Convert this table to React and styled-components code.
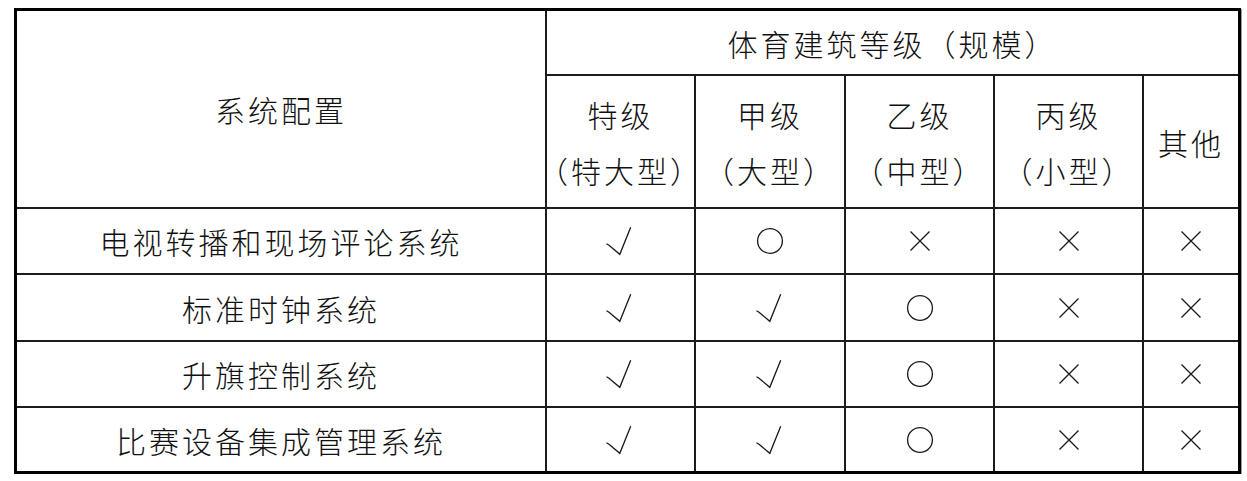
import React from "react";
import styled, { createGlobalStyle } from "styled-components";

const Global = createGlobalStyle`
  html, body { margin: 0; padding: 0; background: #fff; }
  body { font-family: "Noto Sans CJK SC", "Noto Sans", sans-serif; color: #111; }
`;

const Page = styled.div`
  padding: 8px 0 0 14px;
`;

const Table = styled.div`
  display: grid;
  width: max-content;
  grid-template-columns: 528px 147px 148px 147px 147px 94px;
  grid-template-rows: 63px 131px 64px 65px 64px 63px;
  gap: 2px;
  background: #1c1c1c;
  border: 3px solid #000;
  box-shadow: 1px 1px 0 #9a9a9a;
`;

const Cell = styled.div`
  background: #fff;
  display: flex;
  flex-direction: column;
  align-items: center;
  justify-content: center;
  font-size: 30px;
  font-weight: 300;
  line-height: ${(p) => (p.$stack ? "56px" : "1")};
  letter-spacing: 3px;
  white-space: nowrap;
  grid-column: ${(p) => p.$col || "auto"};
  grid-row: ${(p) => p.$row || "auto"};
`;

const Line = styled.span`
  display: block;
  white-space: nowrap;
`;

const Mark = styled.svg`
  display: block;
  overflow: visible;
  fill: none;
  stroke: #1a1a1a;
  stroke-width: 1.3;
  margin-right: ${(p) => p.$shift || 0}px;
`;

const Check = () => (
  <Mark $shift={4} width="25" height="28" viewBox="0 0 25 28">
    <path d="M0.5 16.8 L3 18.2 L13.8 27.3 L24.7 0.2" strokeLinejoin="miter" />
  </Mark>
);

const Circle = () => (
  <Mark width="26" height="26" viewBox="0 0 26 26">
    <circle cx="13" cy="13" r="12.4" />
  </Mark>
);

const Cross = () => (
  <Mark width="20" height="20" viewBox="0 0 20 20">
    <path d="M0.5 0.5 L19.5 19.5 M19.5 0.5 L0.5 19.5" />
  </Mark>
);

const marks = { y: Check, o: Circle, x: Cross };

const grades = [
  ["特级", "（特大型）"],
  ["甲级", "（大型）"],
  ["乙级", "（中型）"],
  ["丙级", "（小型）"],
];

const rows = [
  ["电视转播和现场评论系统", "yoxxx"],
  ["标准时钟系统", "yyoxx"],
  ["升旗控制系统", "yyoxx"],
  ["比赛设备集成管理系统", "yyoxx"],
];

export default function App() {
  return (
    <>
      <Global />
      <Page>
        <Table>
          <Cell $col="1" $row="1 / span 2">系统配置</Cell>
          <Cell $col="2 / span 5" $row="1">体育建筑等级（规模）</Cell>
          {grades.map(([a, b]) => (
            <Cell key={a} $stack $row="2">
              <Line>{a}</Line>
              <Line>{b}</Line>
            </Cell>
          ))}
          <Cell $row="2">其他</Cell>
          {rows.map(([name, vals]) => (
            <React.Fragment key={name}>
              <Cell>{name}</Cell>
              {vals.split("").map((v, i) => {
                const M = marks[v];
                return (
                  <Cell key={i}>
                    <M />
                  </Cell>
                );
              })}
            </React.Fragment>
          ))}
        </Table>
      </Page>
    </>
  );
}
